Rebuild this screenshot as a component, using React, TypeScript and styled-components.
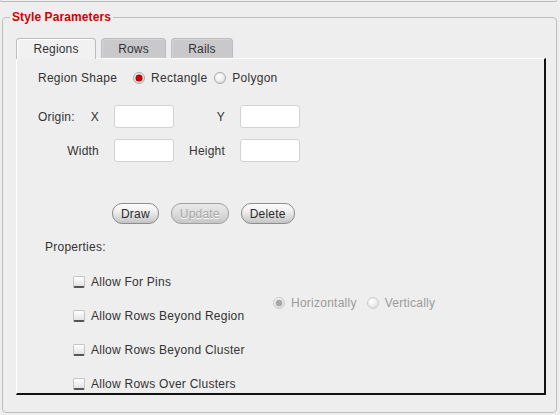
import React from "react";
import styled, { createGlobalStyle, css } from "styled-components";

const Global = createGlobalStyle`
  html, body { margin: 0; padding: 0; background: #eeeeee; }
  body { font-family: "Liberation Sans", Arial, sans-serif; font-size: 12px; color: #2a2a2a; }
  * { box-sizing: border-box; }
`;

const Screen = styled.div`
  width: 560px;
  height: 415px;
  background: #eeeeee;
  overflow: hidden;
`;

const TopStrip = styled.div`
  width: 557px;
  height: 2px;
  border-bottom: 1px solid #b9b9b9;
  border-right: 1px solid #b9b9b9;
  border-left: 1px solid #cfcfcf;
  border-bottom-right-radius: 3px;
`;

const Group = styled.fieldset`
  margin: 8px 0 0 2px;
  width: 555px;
  height: 403px;
  border: 1px solid #bdbdbd;
  border-radius: 4px;
  padding: 14px 10px 0 13px;
  min-width: 0;
`;

const Legend = styled.legend`
  margin-left: -6px;
  padding: 0 2px;
  font-weight: bold;
  color: #d40000;
  line-height: 14px;
  font-size: 12px;
  letter-spacing: 0.1px;
`;

const TabBar = styled.div`
  display: flex;
  gap: 5px;
  height: 20px;
  align-items: flex-end;
`;

const Tab = styled.div<{ $active?: boolean; $width: number }>`
  height: 20px;
  width: ${(p) => p.$width}px;
  display: flex;
  align-items: center;
  justify-content: center;
  border: 1px solid #bcbcbc;
  border-bottom: none;
  border-radius: 4px 4px 0 0;
  color: #333;
  letter-spacing: 0.15px;
  ${(p) =>
    p.$active
      ? css`
          background: #f1f1f1;
          box-shadow: inset 1px 1px 0 #ffffff;
          height: 21px;
          margin-bottom: -1px;
        `
      : css`
          background: #c9c9cc;
          box-shadow: inset 1px 1px 0 #d6d6d8;
        `}
`;

const Panel = styled.div`
  width: 530px;
  height: 337px;
  border-top: 1px solid #ffffff;
  border-left: 1px solid #ffffff;
  border-right: 2px solid #111111;
  border-bottom: 2px solid #111111;
  background: #eeeeee;
  padding: 11px 0 0 21px;
  display: flex;
  flex-direction: column;
`;

const Row = styled.div<{ $gap?: number }>`
  display: flex;
  align-items: center;
  height: 16px;
  gap: ${(p) => p.$gap ?? 0}px;
`;

const Label = styled.span<{ $disabled?: boolean }>`
  white-space: nowrap;
  letter-spacing: 0.25px;
  color: ${(p) => (p.$disabled ? "#9a9a9a" : "#333333")};
`;

const Choice = styled.label`
  display: flex;
  align-items: center;
  gap: 6px;
`;

const RadioDot = styled.span<{ $checked?: boolean; $disabled?: boolean }>`
  width: 12px;
  height: 12px;
  border-radius: 50%;
  border: 1px solid ${(p) => (p.$disabled ? "#cdcdcd" : "#a9a9a9")};
  background: radial-gradient(circle at 40% 35%, #ffffff 0%, #f2f2f2 40%, #cfcfcf 100%);
  display: flex;
  align-items: center;
  justify-content: center;
  &::after {
    content: "";
    display: ${(p) => (p.$checked ? "block" : "none")};
    width: 6px;
    height: 6px;
    border-radius: 50%;
    background: ${(p) => (p.$disabled ? "#a8a8a8" : "#d00000")};
    box-shadow: 0 0 0 0.5px ${(p) => (p.$disabled ? "#bbbbbb" : "#6a0000")};
  }
`;

const FormGrid = styled.div`
  display: grid;
  grid-template-columns: 62px 60px 38px 60px;
  grid-auto-rows: 23px;
  column-gap: 14px;
  row-gap: 11px;
  margin-top: 19px;
  align-items: center;
`;

const FieldLabel = styled.div<{ $split?: boolean }>`
  display: flex;
  justify-content: ${(p) => (p.$split ? "space-between" : "flex-end")};
  letter-spacing: 0.2px;
  padding-right: 1px;
  color: #333333;
`;

const TextBox = styled.input`
  width: 60px;
  height: 23px;
  border: 1px solid #d2d2d2;
  border-radius: 3px;
  background: #ffffff;
  outline: none;
  padding: 0 3px;
  font: inherit;
`;

const ButtonRow = styled.div`
  display: flex;
  gap: 12px;
  margin: 41px 0 0 74px;
`;

const PillButton = styled.button<{ $disabled?: boolean }>`
  height: 21px;
  padding: 0 8px;
  border-radius: 10px;
  border: 1px solid ${(p) => (p.$disabled ? "#a0a0a0" : "#8c8c8c")};
  background: linear-gradient(#fdfdfd 0%, #eeeeee 40%, #d2d2d2 80%, #c4c4c4 100%);
  font-family: "Liberation Sans", Arial, sans-serif;
  font-size: 12px;
  letter-spacing: 0.2px;
  color: ${(p) => (p.$disabled ? "#a5a5a5" : "#2a2a2a")};
  text-shadow: ${(p) => (p.$disabled ? "0 1px 0 #ffffff" : "none")};
  ${(p) =>
    p.$disabled &&
    css`
      background: linear-gradient(#e9e9e9 0%, #dcdcdc 50%, #c6c6c6 100%);
    `}
`;

const SectionTitle = styled(Row)`
  margin: 15px 0 0 7px;
`;

const PropGrid = styled.div`
  display: grid;
  grid-template-columns: 200px auto;
  margin: 19px 0 0 35px;
`;

const CheckList = styled.div`
  display: flex;
  flex-direction: column;
  gap: 18px;
`;

const CheckBox = styled.span`
  width: 12px;
  height: 12px;
  border: 1px solid #c4c4c4;
  border-bottom: 2px solid #555555;
  border-radius: 2px;
  background: linear-gradient(#ffffff, #e2e2e2);
`;

const OrientGroup = styled(Row)`
  margin-top: 21px;
`;

export default function App() {
  return (
    <Screen>
      <Global />
      <TopStrip />
      <Group>
        <Legend>Style Parameters</Legend>
        <TabBar>
          <Tab $active $width={80}>Regions</Tab>
          <Tab $width={65}>Rows</Tab>
          <Tab $width={62}>Rails</Tab>
        </TabBar>
        <Panel>
          <Row $gap={16}>
            <Label>Region Shape</Label>
            <Row $gap={7}>
              <Choice>
                <RadioDot $checked />
                <Label>Rectangle</Label>
              </Choice>
              <Choice>
                <RadioDot />
                <Label>Polygon</Label>
              </Choice>
            </Row>
          </Row>

          <FormGrid>
            <FieldLabel $split>
              <span>Origin:</span>
              <span>X</span>
            </FieldLabel>
            <TextBox />
            <FieldLabel>Y</FieldLabel>
            <TextBox />
            <FieldLabel>Width</FieldLabel>
            <TextBox />
            <FieldLabel>Height</FieldLabel>
            <TextBox />
          </FormGrid>

          <ButtonRow>
            <PillButton>Draw</PillButton>
            <PillButton $disabled>Update</PillButton>
            <PillButton>Delete</PillButton>
          </ButtonRow>

          <SectionTitle>
            <Label>Properties:</Label>
          </SectionTitle>

          <PropGrid>
            <CheckList>
              {[
                "Allow For Pins",
                "Allow Rows Beyond Region",
                "Allow Rows Beyond Cluster",
                "Allow Rows Over Clusters",
              ].map((t) => (
                <Row key={t} $gap={6}>
                  <CheckBox />
                  <Label>{t}</Label>
                </Row>
              ))}
            </CheckList>
            <OrientGroup $gap={10}>
              <Choice>
                <RadioDot $checked $disabled />
                <Label $disabled>Horizontally</Label>
              </Choice>
              <Choice>
                <RadioDot $disabled />
                <Label $disabled>Vertically</Label>
              </Choice>
            </OrientGroup>
          </PropGrid>
        </Panel>
      </Group>
    </Screen>
  );
}
